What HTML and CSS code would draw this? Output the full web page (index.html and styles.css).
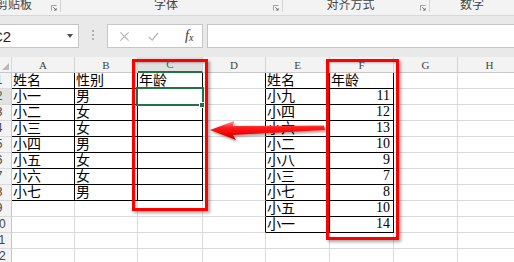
FILE: index.html
```html
<!DOCTYPE html>
<html lang="zh">
<head>
<meta charset="utf-8">
<title>Excel</title>
<link rel="stylesheet" href="styles.css">
</head>
<body>
<div class="ribbon">
  <div class="grp g1"><span class="lbl">剪贴板</span><svg class="launch" viewBox="0 0 7 7"><path d="M0.5 6.5V0.5H6.5" fill="none" stroke="#8a8a8a"/><path d="M2.5 2.5L6 6M6 3.5V6H3.5" fill="none" stroke="#6a6a6a"/></svg></div>
  <div class="sep"></div>
  <div class="grp g2"><span class="lbl">字体</span><svg class="launch" viewBox="0 0 7 7"><path d="M0.5 6.5V0.5H6.5" fill="none" stroke="#8a8a8a"/><path d="M2.5 2.5L6 6M6 3.5V6H3.5" fill="none" stroke="#6a6a6a"/></svg></div>
  <div class="sep"></div>
  <div class="grp g3"><span class="lbl">对齐方式</span><svg class="launch" viewBox="0 0 7 7"><path d="M0.5 6.5V0.5H6.5" fill="none" stroke="#8a8a8a"/><path d="M2.5 2.5L6 6M6 3.5V6H3.5" fill="none" stroke="#6a6a6a"/></svg></div>
  <div class="sep"></div>
  <div class="grp g4"><span class="lbl">数字</span></div>
</div>

<div class="fbar">
  <div class="namebox"><span class="ref">C2</span><span class="caret"></span></div>
  <div class="dots"><i></i><i></i><i></i></div>
  <div class="fxbox">
    <svg class="ico" viewBox="0 0 12 12"><path d="M1.5 1.5L10.5 10.5M10.5 1.5L1.5 10.5" stroke="#b3b3b3" stroke-width="1.2" fill="none"/></svg>
    <svg class="ico" viewBox="0 0 12 12"><path d="M1 6.5L4.5 10L11 2" stroke="#b3b3b3" stroke-width="1.4" fill="none"/></svg>
    <span class="fx">f<sub>x</sub></span>
  </div>
  <div class="finput"></div>
</div>

<div class="sheet">
  <div class="grid">
    <div class="corner"><span class="tri"></span></div>
    <div class="ch kb">A</div><div class="ch kb">B</div><div class="ch kb sel">C</div><div class="ch">D</div><div class="ch kb">E</div><div class="ch kb">F</div><div class="ch">G</div><div class="ch">H</div>

    <div class="rh kr">1</div>
    <div class="c kr kb">姓名</div><div class="c kr kb">性别</div><div class="c kr kb">年龄</div><div class="c kr"></div><div class="c kr kb">姓名</div><div class="c kr kb">年龄</div><div class="c"></div><div class="c"></div>

    <div class="rh kr rsel">2</div>
    <div class="c kr kb">小一</div><div class="c kr kb">男</div><div class="c kr kb"></div><div class="c kr"></div><div class="c kr kb">小九</div><div class="c kr kb n">11</div><div class="c"></div><div class="c"></div>

    <div class="rh kr">3</div>
    <div class="c kr kb">小二</div><div class="c kr kb">女</div><div class="c kr kb"></div><div class="c kr"></div><div class="c kr kb">小四</div><div class="c kr kb n">12</div><div class="c"></div><div class="c"></div>

    <div class="rh kr">4</div>
    <div class="c kr kb">小三</div><div class="c kr kb">女</div><div class="c kr kb"></div><div class="c kr"></div><div class="c kr kb">小六</div><div class="c kr kb n">13</div><div class="c"></div><div class="c"></div>

    <div class="rh kr">5</div>
    <div class="c kr kb">小四</div><div class="c kr kb">男</div><div class="c kr kb"></div><div class="c kr"></div><div class="c kr kb">小二</div><div class="c kr kb n">10</div><div class="c"></div><div class="c"></div>

    <div class="rh kr">6</div>
    <div class="c kr kb">小五</div><div class="c kr kb">女</div><div class="c kr kb"></div><div class="c kr"></div><div class="c kr kb">小八</div><div class="c kr kb n">9</div><div class="c"></div><div class="c"></div>

    <div class="rh kr">7</div>
    <div class="c kr kb">小六</div><div class="c kr kb">女</div><div class="c kr kb"></div><div class="c kr"></div><div class="c kr kb">小三</div><div class="c kr kb n">7</div><div class="c"></div><div class="c"></div>

    <div class="rh kr">8</div>
    <div class="c kr kb">小七</div><div class="c kr kb">男</div><div class="c kr kb"></div><div class="c kr"></div><div class="c kr kb">小七</div><div class="c kr kb n">8</div><div class="c"></div><div class="c"></div>

    <div class="rh">9</div>
    <div class="c"></div><div class="c"></div><div class="c"></div><div class="c kr"></div><div class="c kr kb">小五</div><div class="c kr kb n">10</div><div class="c"></div><div class="c"></div>

    <div class="rh">10</div>
    <div class="c"></div><div class="c"></div><div class="c"></div><div class="c kr"></div><div class="c kr kb">小一</div><div class="c kr kb n">14</div><div class="c"></div><div class="c"></div>

    <div class="rh">11</div>
    <div class="c"></div><div class="c"></div><div class="c"></div><div class="c"></div><div class="c"></div><div class="c"></div><div class="c"></div><div class="c"></div>

    <div class="rh">12</div>
    <div class="c"></div><div class="c"></div><div class="c"></div><div class="c"></div><div class="c"></div><div class="c"></div><div class="c"></div><div class="c"></div>
  </div>

  <div class="selbox"></div>
  <div class="handle"></div>
  <div class="redbox box1"></div>
  <div class="redbox box2"></div>
  <svg class="arrow" viewBox="0 0 130 28" width="130" height="28">
    <defs>
      <linearGradient id="ag" x1="0" y1="0" x2="0" y2="1">
        <stop offset="0" stop-color="#ff9a9a"/>
        <stop offset="0.35" stop-color="#ff1a1a"/>
        <stop offset="0.7" stop-color="#f00000"/>
        <stop offset="1" stop-color="#b80000"/>
      </linearGradient>
      <filter id="sh" x="-10%" y="-40%" width="130%" height="200%">
        <feDropShadow dx="1.5" dy="2" stdDeviation="1.3" flood-color="#000" flood-opacity="0.35"/>
      </filter>
    </defs>
    <path d="M5 13 L29 4 L28 9 L119 8.5 L120 13 L28 18 L31 23 Z" fill="url(#ag)" filter="url(#sh)"/>
  </svg>
</div>
</body>
</html>
```
FILE: styles.css
```css
body {
  margin: 0;
  width: 514px;
  height: 262px;
  overflow: hidden;
  background: #ffffff;
  font-family: "Noto Sans CJK SC", sans-serif;
}

/* ribbon group labels */
.ribbon {
  display: flex;
  height: 15px;
  background: #f3f3f3;
  border-bottom: 1px solid #d8d8d8;
  overflow: hidden;
}
.grp {
  display: flex;
  align-items: flex-start;
}
.g1 { width: 60px; }
.g2 { width: 221px; }
.g3 { width: 146px; }
.g4 { flex: 1; }
.sep {
  width: 1px;
  height: 12px;
  background: #d4d4d4;
}
.lbl {
  flex: 1;
  text-align: center;
  font-size: 12px;
  line-height: 12px;
  color: #444;
  margin-top: -2px;
  white-space: nowrap;
}
.g1 .lbl {
  text-align: left;
  margin-left: -4px;
}
.launch {
  width: 6px;
  height: 6px;
  margin: 5px 3px 0 2px;
}

/* formula bar */
.fbar {
  display: flex;
  align-items: flex-start;
  height: 41px;
  box-sizing: border-box;
  padding-top: 8px;
  background: #e9e9e9;
}
.namebox {
  margin-left: -11px;
  width: 90px;
  height: 24px;
  box-sizing: border-box;
  border: 1px solid #c6c6c6;
  background: #fff;
  display: flex;
  align-items: center;
  padding-left: 2px;
}
.ref {
  font-family: "Liberation Sans", sans-serif;
  font-size: 15px;
  color: #222;
}
.caret {
  margin-left: auto;
  margin-right: 5px;
  width: 0;
  height: 0;
  border-left: 3px solid transparent;
  border-right: 3px solid transparent;
  border-top: 4px solid #505050;
}
.dots {
  width: 28px;
  display: flex;
  flex-direction: column;
  align-items: center;
  gap: 2px;
  padding-top: 6px;
}
.dots i {
  width: 2px;
  height: 2px;
  background: #b0b0b0;
}
.fxbox {
  width: 96px;
  height: 24px;
  box-sizing: border-box;
  border: 1px solid #c6c6c6;
  background: #fff;
  display: flex;
  align-items: center;
  padding-left: 11px;
  gap: 18px;
}
.ico {
  width: 11px;
  height: 11px;
}
.fx {
  margin-left: 8px;
  font-family: "Liberation Serif", serif;
  font-style: italic;
  font-size: 14px;
  color: #333;
}
.fx sub {
  font-size: 10px;
  vertical-align: -1px;
}
.finput {
  flex: 1;
  margin-left: 4px;
  margin-right: -4px;
  height: 24px;
  box-sizing: border-box;
  border: 1px solid #c6c6c6;
  background: #fff;
}

/* sheet */
.sheet {
  position: relative;
}
.grid {
  display: grid;
  width: max-content;
  margin-left: -13px;
  grid-template-columns: 25px 63px 63px 65px 63px 64px 64px 64px 64px;
  grid-auto-rows: 16px;
}
.grid > div {
  box-sizing: border-box;
  border-right: 1px solid #dadada;
  border-bottom: 1px solid #dadada;
  overflow: hidden;
  white-space: nowrap;
}
.corner {
  background: #f3f3f3;
  position: relative;
  border-bottom-color: #c8c8c8 !important;
}
.tri {
  position: absolute;
  right: 2px;
  bottom: 2px;
  width: 0;
  height: 0;
  border-left: 7px solid transparent;
  border-bottom: 7px solid #b9b9b9;
}
.ch {
  background: #f3f3f3;
  border-right-color: #d5d5d5 !important;
  border-bottom-color: #c8c8c8 !important;
  font-family: "Liberation Serif", serif;
  font-size: 11px;
  line-height: 16px;
  text-align: center;
  color: #444;
}
.ch.sel {
  background: #e1e1e1;
  color: #217346;
  border-bottom: 2px solid #217346 !important;
  line-height: 15px;
}
.rh {
  background: #f3f3f3;
  border-right-color: #c8c8c8 !important;
  font-family: "Liberation Sans", sans-serif;
  font-size: 12px;
  line-height: 15px;
  text-align: center;
  color: #444;
}
.rh.rsel {
  background: #e1e1e1;
  color: #217346;
}
.c {
  display: flex;
  align-items: flex-end;
  padding: 0 1px;
  font-family: "Liberation Serif", "Noto Sans CJK SC", serif;
  font-size: 14px;
  line-height: 15px;
  color: #000;
}
.c.n {
  justify-content: flex-end;
  padding-right: 3px;
  padding-bottom: 1px;
}
.grid > .kr { border-right-color: #000; }
.grid > .kb { border-bottom-color: #000; }

/* overlays */
.selbox {
  position: absolute;
  left: 136px;
  top: 30px;
  width: 68px;
  height: 19px;
  box-sizing: border-box;
  border: 2px solid #217346;
}
.handle {
  position: absolute;
  left: 199px;
  top: 45px;
  width: 6px;
  height: 6px;
  box-sizing: border-box;
  background: #217346;
  border: 1px solid #fff;
}
.redbox {
  position: absolute;
  top: 2px;
  box-sizing: border-box;
  border: 3px solid #ff0000;
  box-shadow: 2px 2px 3px rgba(0, 0, 0, 0.35), inset 1px 1px 2px rgba(0, 0, 0, 0.25);
}
.box1 {
  left: 132px;
  width: 76px;
  height: 152px;
}
.box2 {
  left: 326px;
  width: 73px;
  height: 181px;
}
.arrow {
  position: absolute;
  left: 205px;
  top: 60px;
}
```
